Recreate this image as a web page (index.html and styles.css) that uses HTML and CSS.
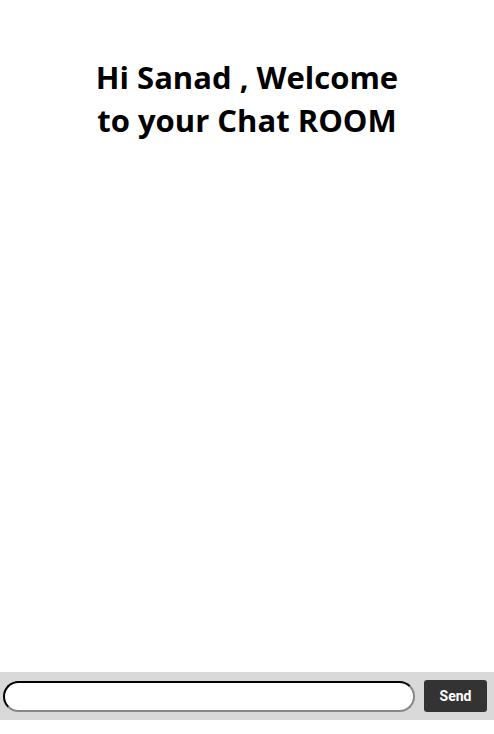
FILE: index.html
```html
<!DOCTYPE html>
<html>
<head>
<meta charset="utf-8">
<link rel="stylesheet" href="styles.css">
</head>
<body>
<div class="page">
  <header class="header">
    <h1 class="title">Hi Sanad , Welcome to your Chat ROOM</h1>
  </header>
  <main class="messages"></main>
  <form class="composer">
    <input class="composer-input" type="text">
    <button class="composer-send" type="button">Send</button>
  </form>
  <div class="footer-space"></div>
</div>
</body>
</html>
```
FILE: styles.css
```css
html, body {
  margin: 0;
  padding: 0;
  background: #fff;
}
.page {
  display: flex;
  flex-direction: column;
  height: 100vh;
}
.header {
  display: flex;
  justify-content: center;
  padding-top: 56px;
}
.title {
  margin: 0;
  width: 330px;
  text-align: center;
  font-family: "Open Sans", sans-serif;
  font-weight: 700;
  font-size: 31px;
  line-height: 43px;
  color: #000;
}
.messages {
  flex: 1;
}
.composer {
  display: flex;
  align-items: center;
  gap: 9px;
  height: 48px;
  padding: 0 7px 0 3px;
  margin: 0;
  background: #d9d9d9;
  box-sizing: border-box;
}
.composer-input {
  flex: 1;
  height: 31px;
  box-sizing: border-box;
  border-radius: 16px;
  border: 2px inset #767676;
  border-top-color: #222;
  border-left-color: #222;
  border-bottom-color: #888;
  border-right-color: #888;
  background: #fff;
  outline: none;
  padding: 0 10px;
}
.composer-send {
  width: 63px;
  height: 32px;
  border: none;
  border-radius: 3px;
  background: #333;
  color: #fff;
  font-family: Roboto, Arial, sans-serif;
  font-weight: 700;
  font-size: 14px;
  padding: 0;
}
.footer-space {
  height: 14px;
}
```
